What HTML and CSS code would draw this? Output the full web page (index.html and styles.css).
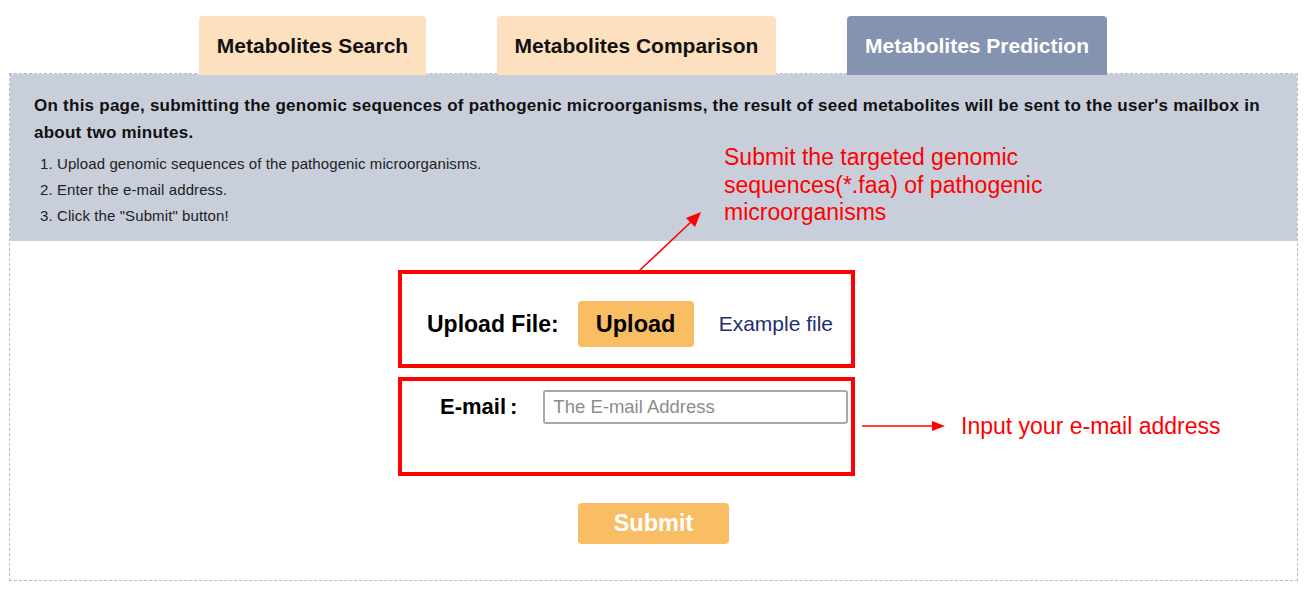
FILE: index.html
```html
<!DOCTYPE html>
<html lang="en">
<head>
  <meta charset="UTF-8">
  <title>Metabolites Prediction</title>
  <link rel="stylesheet" href="styles.css">
</head>
<body>
  <div class="page">
    <div class="tabs">
      <a class="tab" href="#">Metabolites Search</a>
      <a class="tab" href="#">Metabolites Comparison</a>
      <a class="tab active" href="#">Metabolites Prediction</a>
    </div>

    <div class="panel">
      <div class="intro">
        <p class="lead">On this page, submitting the genomic sequences of pathogenic microorganisms, the result of seed metabolites will be sent to the user's mailbox in about two minutes.</p>
        <ol class="steps">
          <li>Upload genomic sequences of the pathogenic microorganisms.</li>
          <li>Enter the e-mail address.</li>
          <li>Click the "Submit" button!</li>
        </ol>
      </div>

      <form class="predict-form" onsubmit="return false">
        <div class="mark-box upload-box">
          <span class="field-label">Upload File:</span>
          <button type="button" class="btn-upload">Upload</button>
          <a class="example-link" href="#">Example file</a>
        </div>
        <div class="mark-box email-box">
          <span class="field-label">E-mail<span class="colon">:</span></span>
          <input type="email" class="email-input" placeholder="The E-mail Address">
        </div>
        <div class="submit-row">
          <button type="submit" class="btn-submit">Submit</button>
        </div>
      </form>
    </div>

    <!-- annotations drawn over the page -->
    <p class="note note-upload">Submit the targeted genomic sequences(*.faa) of pathogenic microorganisms</p>
    <p class="note note-email">Input your e-mail address</p>
    <svg class="arrows" width="1312" height="591" viewBox="0 0 1312 591">
      <line x1="638" y1="272" x2="692" y2="221" stroke="#ff0000" stroke-width="1.6"/>
      <polygon points="701,212 686,218 695,227" fill="#ff0000"/>
      <line x1="862" y1="426" x2="934" y2="426" stroke="#ff0000" stroke-width="1.6"/>
      <polygon points="945,426 932,421 932,431" fill="#ff0000"/>
    </svg>
  </div>
</body>
</html>
```

FILE: styles.css
```css
body {
  margin: 0;
  font-family: "Liberation Sans", Arial, sans-serif;
  background: #ffffff;
  color: #111111;
}

.page {
  position: relative;
  width: 1312px;
  height: 591px;
}

/* tabs */
.tabs {
  display: flex;
  gap: 71px;
  padding: 16px 0 0 199px;
  height: 57px;
}

.tab {
  display: flex;
  align-items: center;
  justify-content: center;
  height: 59px;
  border-radius: 4px 4px 0 0;
  background: #fde0bf;
  color: #111111;
  font-size: 21px;
  font-weight: bold;
  text-decoration: none;
  position: relative;
  z-index: 1;
}

.tab:nth-child(1) { width: 227px; }
.tab:nth-child(2) { width: 279px; }
.tab:nth-child(3) { width: 260px; }

.tab.active {
  background: #8393b0;
  color: #ffffff;
}

/* main panel */
.panel {
  margin-left: 9px;
  width: 1287px;
  height: 506px;
  border: 1px dashed #b3bccb;
}

.intro {
  background: #c8cfdb;
  height: 167px;
  padding: 18px 24px 0;
  box-sizing: border-box;
}

.lead {
  margin: 0;
  font-size: 17px;
  font-weight: bold;
  letter-spacing: 0.25px;
  line-height: 27px;
  color: #111111;
}

.steps {
  margin: 5px 0 0;
  padding-left: 23px;
  font-size: 15px;
  letter-spacing: 0.1px;
  line-height: 26px;
  color: #222222;
}

/* form */
.predict-form {
  padding-top: 29px;
}

.mark-box {
  margin-left: 388px;
  width: 457px;
  border: 4px solid #ff0000;
  box-sizing: border-box;
  display: flex;
}

.upload-box {
  height: 98px;
  align-items: center;
  padding: 10px 0 0 25px;
}

.email-box {
  height: 99px;
  margin-top: 9px;
  align-items: flex-start;
  padding: 9px 0 0 38px;
}

.field-label {
  font-size: 23px;
  font-weight: bold;
  color: #000000;
}

.btn-upload {
  margin-left: 19px;
  width: 116px;
  height: 46px;
  border: none;
  border-radius: 4px;
  background: #f9bd63;
  font-family: inherit;
  font-size: 23.5px;
  font-weight: bold;
  color: #000000;
  cursor: pointer;
}

.example-link {
  margin-left: 25px;
  font-size: 21px;
  color: #1d2f6f;
  text-decoration: none;
}

.email-box .field-label {
  font-size: 22px;
  line-height: 34px;
}

.colon {
  margin-left: 4px;
}

.email-input {
  margin-left: 26px;
  width: 305px;
  height: 34px;
  box-sizing: border-box;
  border: 2px solid #a8a8a8;
  border-radius: 3px;
  padding: 0 8px;
  font-family: inherit;
  font-size: 18.5px;
}

.email-input::placeholder {
  color: #8c8c8c;
}

.submit-row {
  display: flex;
  justify-content: center;
  margin-top: 27px;
}

.btn-submit {
  width: 151px;
  height: 41px;
  border: none;
  border-radius: 4px;
  background: #f9bd63;
  font-family: inherit;
  font-size: 23.5px;
  font-weight: bold;
  color: #ffffff;
  cursor: pointer;
}

/* annotations */
.note {
  position: absolute;
  margin: 0;
  color: #ff0000;
  font-size: 23px;
  line-height: 27.5px;
}

.note-upload {
  left: 724px;
  top: 144px;
  width: 330px;
}

.note-email {
  left: 961px;
  top: 413px;
}

.arrows {
  position: absolute;
  left: 0;
  top: 0;
  pointer-events: none;
}
```
